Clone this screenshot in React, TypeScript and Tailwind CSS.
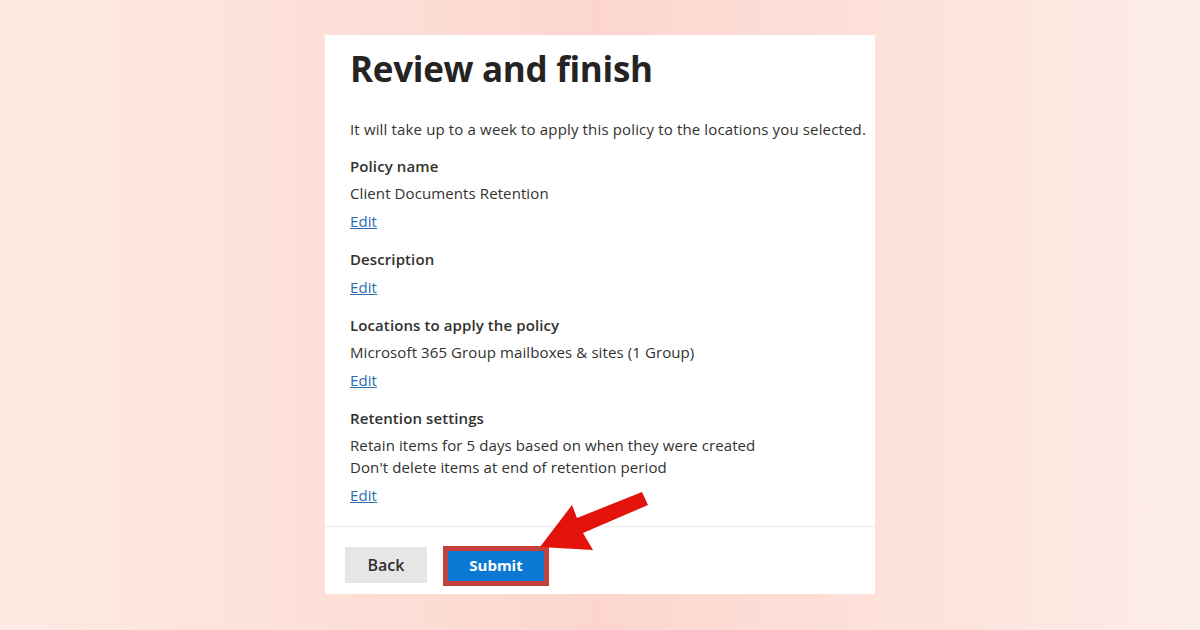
const sections = [
  { title: 'Policy name', lines: ['Client Documents Retention'] },
  { title: 'Description', lines: [] as string[] },
  { title: 'Locations to apply the policy', lines: ['Microsoft 365 Group mailboxes & sites (1 Group)'] },
  {
    title: 'Retention settings',
    lines: ['Retain items for 5 days based on when they were created', "Don't delete items at end of retention period"],
  },
];

function Arrow() {
  return (
    <svg className="pointer-events-none absolute left-[530px] top-[485px]" width="130" height="75" viewBox="0 0 130 75">
      <polygon points="10,62 42,20 47,33 112,7 118,20 53,48 63,65" fill="#e3120b" />
    </svg>
  );
}

export default function App() {
  return (
    <div
      className="relative flex h-[630px] w-[1200px] justify-center bg-gradient-to-r from-[#fdebe3] via-[#fcd6ce] to-[#fdede8] pt-[35px]"
      style={{ fontFamily: '"Open Sans", sans-serif' }}
    >
      <div className="flex h-[559px] w-[550px] flex-col bg-white">
        <div className="min-h-0 flex-1 px-[25px] text-[#323130]">
          <h1 className="mt-[12px] text-[35px] font-bold leading-[44px] tracking-[-0.3px] text-[#252423]">Review and finish</h1>
          <p className="mt-[27px] whitespace-nowrap text-[15px] leading-[22px] tracking-[0.15px]">
            It will take up to a week to apply this policy to the locations you selected.
          </p>
          <div className="mt-[15px] flex flex-col gap-[16px] text-[15px] tracking-[0.1px]">
            {sections.map((s) => (
              <div key={s.title} className="flex flex-col">
                <div className="font-semibold leading-[22px]">{s.title}</div>
                {s.lines.length > 0 && (
                  <div className="mt-[5px] leading-[22px]">
                    {s.lines.map((l) => (
                      <div key={l}>{l}</div>
                    ))}
                  </div>
                )}
                <a className="mt-[6px] w-fit leading-[22px] text-[#2a6cb4] underline">Edit</a>
              </div>
            ))}
          </div>
        </div>
        <div className="flex h-[68px] shrink-0 items-start gap-[16px] border-t border-[#ebebeb] px-[20px] pt-[19px]">
          <button className="mt-[1px] h-[36px] w-[82px] bg-[#e6e6e6] text-[16px] font-semibold text-[#323130]">Back</button>
          <div className="border-[5px] border-[#c4403a]">
            <button className="h-[30px] w-[96px] bg-[#0b78d4] pb-[2px] text-[15px] font-bold text-white">Submit</button>
          </div>
        </div>
      </div>
      <Arrow />
    </div>
  );
}
